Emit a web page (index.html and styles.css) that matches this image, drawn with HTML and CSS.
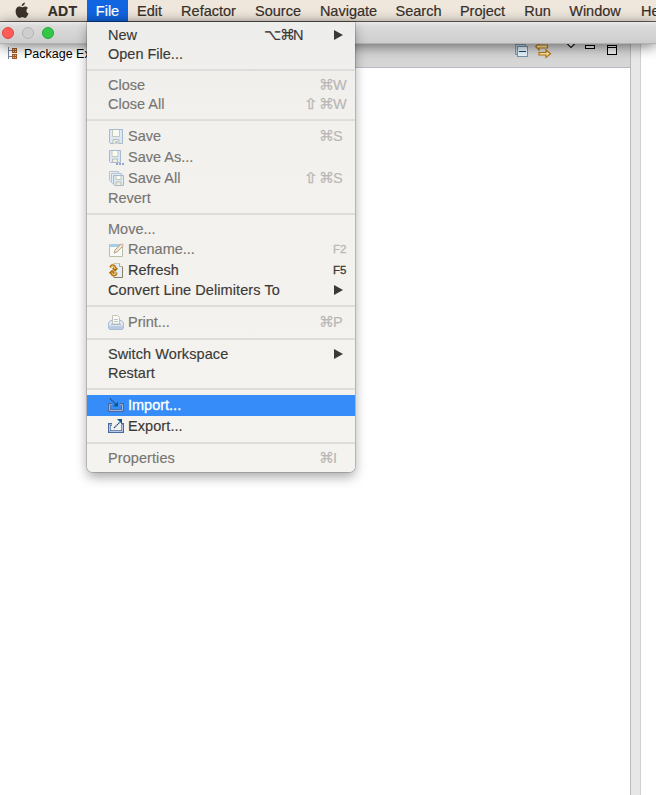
FILE: index.html
```html
<!DOCTYPE html>
<html lang="en">
<head>
<meta charset="utf-8">
<title>ADT</title>
<link rel="stylesheet" href="styles.css">
</head>
<body>
<header class="menubar">
  <span class="apple"><svg width="14" height="17" viewBox="0 0 14 17"><path d="M9.9 0.6C10 2.6 8.500 4.200 6.700 4.200C6.500 2.500 8.100 0.800 9.900 0.600ZM7 5.200C7.800 5.200 8.700 4.400 10 4.400C11.300 4.400 12.500 5 13.100 6C10.700 7.400 11 10.500 13.500 11.600C12.800 13.500 11.500 15.900 10.100 15.900C9 15.900 8.600 15.300 7.300 15.300C6 15.300 5.500 15.900 4.500 15.900C2.700 15.900 0.600 12.500 0.600 9.300C0.600 6.200 2.500 4.500 4.400 4.500C5.500 4.500 6.300 5.200 7 5.200Z"/></svg></span>
  <span class="app">ADT</span>
  <span class="open">File</span>
  <span>Edit</span>
  <span>Refactor</span>
  <span>Source</span>
  <span>Navigate</span>
  <span>Search</span>
  <span>Project</span>
  <span>Run</span>
  <span>Window</span>
  <span class="help">Help</span>
</header>
<div class="titlebar"><i class="light red"></i><i class="light gray"></i><i class="light green"></i></div>
<main class="workbench">
  <section class="view">
    <div class="tabs">
      <div class="tab">
        <svg width="11" height="14" viewBox="0 0 11 14" shape-rendering="crispEdges"><path d="M.5 1v12M1 4.500h3M1 10.500h3" stroke="#76839a" fill="none"/><path d="M4 2h5v5h-5zM4 8h5v5h-5z" fill="#9b5b2c"/><path d="M5 3h1v1h-1zM7 3h1v1h-1zM5 5h1v1h-1zM7 5h1v1h-1zM5 9h1v1h-1zM7 9h1v1h-1zM5 11h1v1h-1zM7 11h1v1h-1z" fill="#f0c890"/></svg>
        <span>Package Explorer</span>
      </div>
      <div class="tools">
        <svg width="115" height="16" viewBox="0 0 115 16">
          <g shape-rendering="crispEdges"><path d="M.5-1v11.500h2M.5.500h10v2" fill="none" stroke="#7e9db8"/><rect x="1" y="1" width="9" height="9" fill="#b9d3e5"/><rect x="2.500" y="2.500" width="10" height="10" fill="#e9f4fb" stroke="#7893b0"/><path d="M4 7.500h7" stroke="#124a80"/></g>
          <path d="M24-1L20.700 2.500L24 6V4H32.500V1H24ZM24 8.500H31V6L35.500 9.700L31 13.500V11H24Z" fill="#fce9a6" stroke="#bb780f" stroke-width="1.200"/>
          <path d="M52-.500L56 3.500L60-.500" fill="#fff" stroke="#111" stroke-width="1.200"/>
          <g shape-rendering="crispEdges" fill="#eee" stroke="#000"><rect x="70.500" y="1.500" width="9" height="3"/><rect x="92.500" y="1.500" width="9" height="9"/><path d="M92 3.500h10"/></g>
        </svg>
      </div>
    </div>
  </section>
  <div class="sash"></div>
  <section class="editor"></section>
</main>

<nav class="menu">
  <div class="row"><span>New</span><span class="keys wide"><b>⌥</b><b>⌘</b>N</span><i class="arrow"></i></div>
  <div class="row"><span>Open File...</span></div>
  <hr>
  <div class="row off"><span>Close</span><span class="keys"><b>⌘</b>W</span></div>
  <div class="row off"><span>Close All</span><span class="keys"><b class="shift">⇧</b><b>⌘</b>W</span></div>
  <hr>
  <div class="row tall off"><svg class="icon" viewBox="0 0 16 16"><path d="M1.500.500h13v14h-12l-1-1z" fill="#dce8f3" stroke="#a5b9d1"/><path d="M4.500 1v6.500h7V1" fill="#fbfaf0" stroke="#c0c8bf"/><path d="M5 14.500v-4h6v4" fill="#f7eed0" stroke="#b5bfc6"/><path d="M7.500 12h2v2h-2z" fill="#a6bdda"/></svg><span>Save</span><span class="keys"><b>⌘</b>S</span></div>
  <div class="row tall off"><svg class="icon" viewBox="0 0 16 16"><path d="M1.500.500h11v12h-10l-1-1z" fill="#dce8f3" stroke="#a5b9d1"/><path d="M4 1v5.500h6V1" fill="#fbfaf0" stroke="#c0c8bf"/><path d="M4.500 12v-3h5v3" fill="#f7eed0" stroke="#b5bfc6"/><path d="M8 13h2v2H8zM11 13h2v2h-2zM14 13h2v2h-2z" fill="#8fa8cc"/></svg><span>Save As...</span></div>
  <div class="row tall off"><svg class="icon" viewBox="0 0 16 16"><path d="M1.500.500h9v10h-8l-1-1z" fill="#e8eff2" stroke="#b4c3cf"/><path d="M3.500 2.500h10v10h-9l-1-1z" fill="#e5edf3" stroke="#b4c3cf"/><path d="M5.500 4.500h10v10h-9l-1-1z" fill="#dce8f3" stroke="#a5b9d1"/><path d="M8 5v3.500h5V5" fill="#fbfaf0" stroke="#c0c8bf"/><path d="M8 14v-3h5v3" fill="#f7eed0" stroke="#b5bfc6"/></svg><span>Save All</span><span class="keys"><b class="shift">⇧</b><b>⌘</b>S</span></div>
  <div class="row off"><span>Revert</span></div>
  <hr>
  <div class="row off"><span>Move...</span></div>
  <div class="row tall off"><svg class="icon" viewBox="0 0 16 16"><path d="M1.500 2.500h13v12h-13z" fill="#f8faf7" stroke="#b8bea9"/><path d="M1 2h11v3H1z" fill="#a9cce5"/><path d="M6 11l1-3 6-6 2 2-6 6z" fill="#f5e6c7" stroke="#b6a58e"/><path d="M12.500 2.500l1.500-1.500 2 2-1.500 1.500z" fill="#e9b8b0"/></svg><span>Rename...</span><span class="keys fn">F2</span></div>
  <div class="row tall"><svg class="icon" viewBox="0 0 16 16"><path d="M5.500.500h6l3 3v11h-9z" fill="#e3effb" stroke="#d3c69d"/><path d="M11.500.500v3h3" fill="#fff" stroke="#b3a98a"/><path d="M14.500 4v10.500H6" fill="none" stroke="#8a7f63"/><path d="M2.500 4.500Q3 2 5.500 2.500Q7.500 3 7 5.500M4.800 5L7 7.300L9.200 5M8.500 9.500Q8 12.500 5.500 12.300Q3.500 12 3.800 10M1.600 10.500L4 8.200L6.200 10.500" fill="none" stroke="#b4720c" stroke-width="2.200"/><path d="M3 4.200Q4 2.600 5.500 3Q6.800 3.600 6.900 6M8 10Q7.500 12 5.500 11.700Q4 11.500 4 9.500" fill="none" stroke="#fbdf85" stroke-width=".9"/></svg><span>Refresh</span><span class="keys fn">F5</span></div>
  <div class="row loose"><span>Convert Line Delimiters To</span><i class="arrow"></i></div>
  <hr>
  <div class="row tall off"><svg class="icon" viewBox="0 0 16 16"><path d="M.500 7.500l2-2h11l2 2v6l-1 1h-13l-1-1z" fill="#dce5f0" stroke="#aabcd4"/><path d="M1 11h14v3H1z" fill="#b9cbe2"/><path d="M4.500 9V.500h5l2 2V9z" fill="#fafaf2" stroke="#c1c3b4"/><path d="M6 4.500h4M6 6.500h4" stroke="#b5c4d6"/><path d="M3 9.500h10" stroke="#a9b9ce"/></svg><span>Print...</span><span class="keys"><b>⌘</b>P</span></div>
  <hr>
  <div class="row loose"><span>Switch Workspace</span><i class="arrow"></i></div>
  <div class="row"><span>Restart</span></div>
  <hr>
  <div class="row tall active"><svg class="icon" viewBox="0 0 16 16"><path d="M4 6.500H1.300V12.700H14.700V6.500H12" fill="none" stroke="#4c6a9f" stroke-width="2.800"/><path d="M4 6.800H1.500V12.500H14.500V6.800H12" fill="none" stroke="#a3b8d5" stroke-width="1"/><path d="M2 .500L8.500 7" stroke="#174c79" stroke-width="1.200" stroke-dasharray="1.500 .5"/><path d="M10 3.500v5H5z" fill="#125689"/></svg><span>Import...</span></div>
  <div class="row tall loose"><svg class="icon" viewBox="0 0 16 16"><path d="M4 5.500H1.300V12.700H14.700V5.500H13" fill="none" stroke="#4c6a9f" stroke-width="2.800"/><path d="M4 5.800H1.500V12.500H14.500V5.800H13" fill="none" stroke="#b5cae5" stroke-width="1"/><path d="M6 9L12 3" stroke="#174c79" stroke-width="1.200" stroke-dasharray="1.500 .5"/><path d="M9 0h5v5z" fill="#125689"/></svg><span>Export...</span></div>
  <hr>
  <div class="row off loose"><span>Properties</span><span class="keys"><b>⌘</b>I</span></div>
</nav>
</body>
</html>
```
FILE: styles.css
```css
* { box-sizing: border-box; }
body {
  margin: 0;
  width: 656px;
  height: 795px;
  overflow: hidden;
  display: flex;
  flex-direction: column;
  background: #fff;
  font: 14.5px/19px "Liberation Sans", Arial, sans-serif;
  color: #3b3936;
}
.menubar {
  flex: none;
  height: 22px;
  display: grid;
  grid-template-columns: 38px 49px 41px 43px 75px 64px 77px 63px 65px 45px 70px 26px;
  background: #efe7dc;
  border-bottom: 1px solid #686058;
  line-height: 22px;
  text-align: center;
  white-space: nowrap;
  color: #37302a;
  -webkit-text-stroke: .2px;
}
.apple { padding-left: 5px; }
.apple svg { display: block; margin: 2px auto 0; fill: #3b332b; }
.app { font-weight: bold; font-size: 14px; letter-spacing: .3px; }
.open { height: 22px; background: #1165e0; color: #fff; border-bottom: 1px solid #0b4da9; }
.help { text-align: left; padding-left: 11px; overflow: hidden; }
.titlebar {
  flex: none;
  position: relative;
  height: 22px;
  display: flex;
  gap: 8px;
  padding: 5px 0 0 2px;
  background: linear-gradient(#e9e9e9, #dcdbdc 4px, #cecdce);
  border-bottom: 1px solid #b0b0b0;
  box-shadow: 0 2px 14px rgba(0, 0, 0, .55);
}
.light { width: 12px; height: 12px; border-radius: 50%; border: 1px solid; }
.red { background: #ff5c58; border-color: #e0443f; }
.gray { background: #cecece; border-color: #b4b4b4; }
.green { background: #33c748; border-color: #22a935; }
.workbench { flex: 1; display: flex; }
.view { width: 631px; border-right: 1px solid #b9b9b9; }
.tabs {
  height: 24px;
  display: flex;
  justify-content: space-between;
  background: #d6d6d6;
  border-bottom: 1px solid #b8b8c8;
}
.tab {
  width: 180px;
  height: 24px;
  padding-left: 8px;
  display: flex;
  gap: 5px;
  background: #fff;
  font-size: 12.5px;
  line-height: 20px;
  color: #000;
  white-space: nowrap;
}
.tab svg { margin-top: 2px; }
.tools svg { display: block; }
.sash { width: 10px; background: #e7e7e7; border-right: 1px solid #d0d0d0; }
.editor { flex: 1; background: #fff; }

.menu {
  position: absolute;
  left: 87px;
  top: 22px;
  width: 268px;
  height: 450px;
  padding-top: 4px;
  background: linear-gradient(#ededeb, #f3f1ee 100px, #f4f3f0);
  border-radius: 0 0 6px 6px;
  box-shadow: 0 0 0 1px rgba(0, 0, 0, .16), 0 5px 12px rgba(0, 0, 0, .34);
}
.menu hr {
  height: 2px;
  margin: 5px 0;
  border: 0;
  background: #deddda;
}
.row {
  height: 19px;
  padding-left: 21px;
  display: flex;
  align-items: center;
  white-space: nowrap;
  -webkit-text-stroke: .15px;
}
.tall { height: 21px; }
.loose { letter-spacing: .08px; }
.off { color: #777572; }
.active { background: #368cf8; color: #fff; }
.active > span { -webkit-text-stroke: .35px; }
.icon { width: 16px; height: 16px; margin-right: 4px; flex: none; }
.keys {
  display: grid;
  grid-auto-flow: column;
  grid-auto-columns: 14px;
  margin-left: auto;
  margin-right: 8px;
}
.off .keys { color: #b9b7b4; }
.keys b { font: 15px/19px "DejaVu Sans", sans-serif; }
.keys .shift { transform: scaleX(1.2); -webkit-text-stroke: .3px; }
.wide { grid-template-columns: 16px 13px 11px; margin-right: 30px; }
.fn { font-size: 11.5px; -webkit-text-stroke: .3px; }
.arrow {
  margin-left: auto;
  margin-right: 12px;
  margin-bottom: 2px;
  border-left: 9px solid #3b3936;
  border-top: 5px solid transparent;
  border-bottom: 5px solid transparent;
}
.keys + .arrow { margin-left: 0; }
```
